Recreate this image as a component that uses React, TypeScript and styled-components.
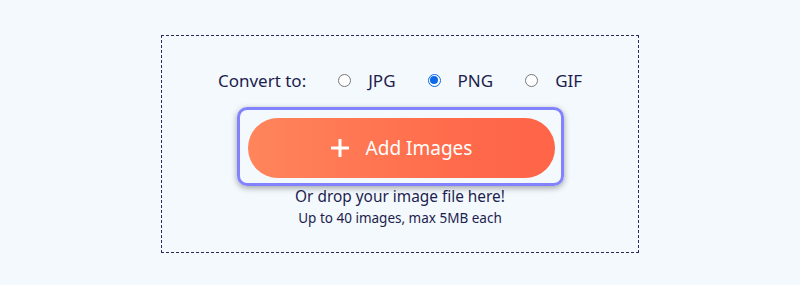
import styled, { createGlobalStyle } from "styled-components";

const Global = createGlobalStyle`
  html, body {
    margin: 0;
    background: #f3f9fd;
    font-family: "Noto Sans", "Open Sans", sans-serif;
  }
`;

const Page = styled.div`
  width: 800px;
  height: 285px;
  display: flex;
  justify-content: center;
  padding-top: 35px;
  box-sizing: border-box;
`;

const DropZone = styled.div`
  width: 478px;
  height: 218px;
  box-sizing: border-box;
  border: 1px dashed #2b2b5a;
  display: flex;
  flex-direction: column;
  align-items: center;
  padding-top: 31px;
  color: #1d1d4e;
`;

const Row = styled.div`
  display: flex;
  align-items: center;
  height: 26px;
  font-size: 17px;
`;

const Label = styled.span`
  margin-right: 32px;
`;

const Option = styled.label`
  display: flex;
  align-items: center;
  margin-right: 32px;
  &:last-child {
    margin-right: 0;
  }
`;

const Dot = styled.span<{ checked?: boolean }>`
  width: 13px;
  height: 13px;
  border-radius: 50%;
  box-sizing: border-box;
  border: 1px solid ${(p) => (p.checked ? "#0b68e8" : "#777")};
  background: #fff;
  margin-right: 17px;
  display: flex;
  align-items: center;
  justify-content: center;
  &::after {
    content: "";
    display: ${(p) => (p.checked ? "block" : "none")};
    width: 8px;
    height: 8px;
    border-radius: 50%;
    background: #0b68e8;
  }
`;

const FocusRing = styled.div`
  margin-top: 14px;
  padding: 8px 6px 5px 8px;
  border: 3px solid #8282ff;
  border-radius: 10px;
  box-shadow: 0 2px 6px rgba(0, 0, 0, 0.35);
`;

const Button = styled.button`
  width: 307px;
  height: 60px;
  border: none;
  border-radius: 30px;
  background: linear-gradient(90deg, #ff855b 0%, #ff6a4b 70%, #ff6447 100%);
  color: #fff;
  font-family: "Noto Sans", "Open Sans", sans-serif;
  font-size: 19px;
  display: flex;
  align-items: center;
  justify-content: center;
  gap: 16px;
  padding: 0;
`;

const Hints = styled.div`
  display: flex;
  flex-direction: column;
  align-items: center;
`;

const Hint = styled.div<{ small?: boolean }>`
  font-size: ${(p) => (p.small ? "13.5px" : "15.4px")};
  line-height: ${(p) => (p.small ? "20px" : "22px")};
`;

export default function App() {
  const formats = ["JPG", "PNG", "GIF"];
  return (
    <>
      <Global />
      <Page>
        <DropZone>
          <Row>
            <Label>Convert to:</Label>
            {formats.map((f) => (
              <Option key={f}>
                <Dot checked={f === "PNG"} />
                {f}
              </Option>
            ))}
          </Row>
          <FocusRing>
            <Button>
              <svg width="20" height="20" viewBox="0 0 20 20">
                <path d="M10 1v18M1 10h18" stroke="#fff" strokeWidth="3" />
              </svg>
              Add Images
            </Button>
          </FocusRing>
          <Hints>
            <Hint>Or drop your image file here!</Hint>
            <Hint small>Up to 40 images, max 5MB each</Hint>
          </Hints>
        </DropZone>
      </Page>
    </>
  );
}
